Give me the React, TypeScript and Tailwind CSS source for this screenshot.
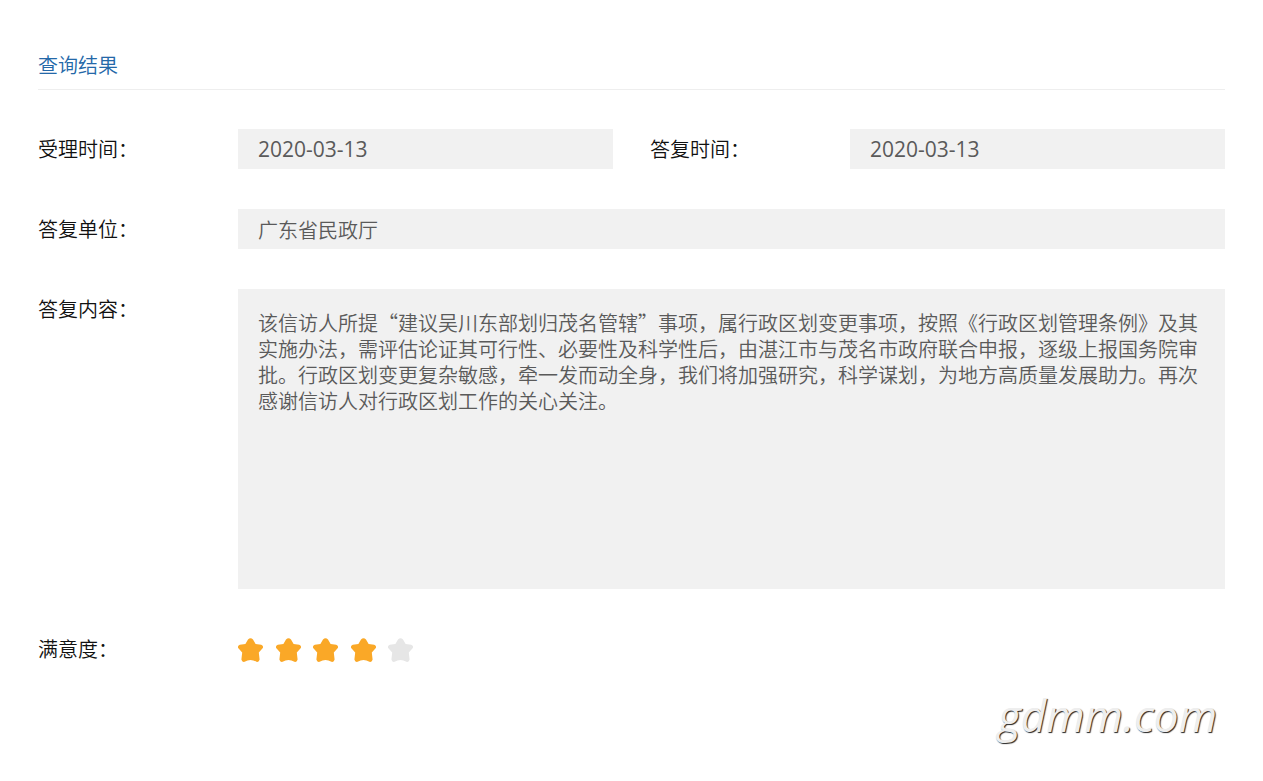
import type { ReactNode } from "react";

const reply = {
  acceptedAt: "2020-03-13",
  repliedAt: "2020-03-13",
  unit: "广东省民政厅",
  content:
    "该信访人所提“建议吴川东部划归茂名管辖”事项，属行政区划变更事项，按照《行政区划管理条例》及其实施办法，需评估论证其可行性、必要性及科学性后，由湛江市与茂名市政府联合申报，逐级上报国务院审批。行政区划变更复杂敏感，牵一发而动全身，我们将加强研究，科学谋划，为地方高质量发展助力。再次感谢信访人对行政区划工作的关心关注。",
  score: 4,
};

export default function App() {
  return (
    <main className="bg-white px-[38px] pt-10 pb-8 font-['Noto_Sans_CJK_SC',sans-serif] text-xl font-[350] text-[#111]">
      <h1 className="h-[50px] border-b border-[#eee] leading-[49px] text-[#2468a8]">查询结果</h1>

      <form className="mt-[39px] grid grid-cols-2 gap-x-[37px] gap-y-10">
        <Field id="accepted" label="受理时间：">
          <DateInput id="accepted" value={reply.acceptedAt} />
        </Field>
        <Field id="replied" label="答复时间：">
          <DateInput id="replied" value={reply.repliedAt} />
        </Field>
        <Field id="unit" label="答复单位：" wide>
          <input
            id="unit"
            readOnly
            value={reply.unit}
            className="block h-10 w-full min-w-0 bg-[#f1f1f1] px-5 text-[#5a5a5a] outline-none"
          />
        </Field>
        <Field id="content" label="答复内容：" wide>
          <textarea
            id="content"
            readOnly
            value={reply.content}
            className="block h-[300px] w-full resize-none bg-[#f1f1f1] px-5 pt-[21px] leading-[26px] text-[#5a5a5a] outline-none"
          />
        </Field>
        <div className="col-span-2 flex">
          <span id="score" className="w-[200px] shrink-0 leading-10">
            满意度：
          </span>
          <div
            role="img"
            aria-labelledby="score"
            className="flex h-[42px] w-[175px] items-center justify-between"
          >
            {[1, 2, 3, 4, 5].map((n) => (
              <Star key={n} filled={n <= reply.score} />
            ))}
          </div>
        </div>
      </form>

      <p className="mt-4 pr-2 text-right font-['Open_Sans',sans-serif] text-[44px] leading-[56px] font-medium text-[#eee] italic [text-shadow:1px_1px_1px_#222]">
        gdmm.com
      </p>
    </main>
  );
}

function Field({
  id,
  label,
  wide,
  children,
}: {
  id: string;
  label: string;
  wide?: boolean;
  children: ReactNode;
}) {
  return (
    <div className={wide ? "col-span-2 flex" : "flex"}>
      <label htmlFor={id} className="w-[200px] shrink-0 leading-10">
        {label}
      </label>
      <div className="min-w-0 flex-1">{children}</div>
    </div>
  );
}

function DateInput({ id, value }: { id: string; value: string }) {
  return (
    <input
      id={id}
      readOnly
      value={value}
      className="block h-10 w-full min-w-0 bg-[#f1f1f1] px-5 font-['Open_Sans',sans-serif] text-[21px] font-normal text-[#5a5a5a] outline-none"
    />
  );
}

function Star({ filled }: { filled: boolean }) {
  return (
    <svg
      viewBox="0 0 25 24"
      className={filled ? "h-6 w-[25px] text-[#faa827]" : "h-6 w-[25px] text-[#e6e6e6]"}
      aria-hidden="true"
    >
      <path
        fill="currentColor"
        d="M10 1.500Q12.500-1 15 1.500L17.600 6L23.200 6.800Q26 8 24.600 10.300L20.800 14.600L21.600 21.500Q21 24.600 18.400 23.800Q15.500 22 12.500 22Q9.500 22 6.600 23.800Q4 24.600 3.400 21.500L4.200 14.600L.4 10.300Q-1 8 1.800 6.800L7.400 6Z"
      />
    </svg>
  );
}
